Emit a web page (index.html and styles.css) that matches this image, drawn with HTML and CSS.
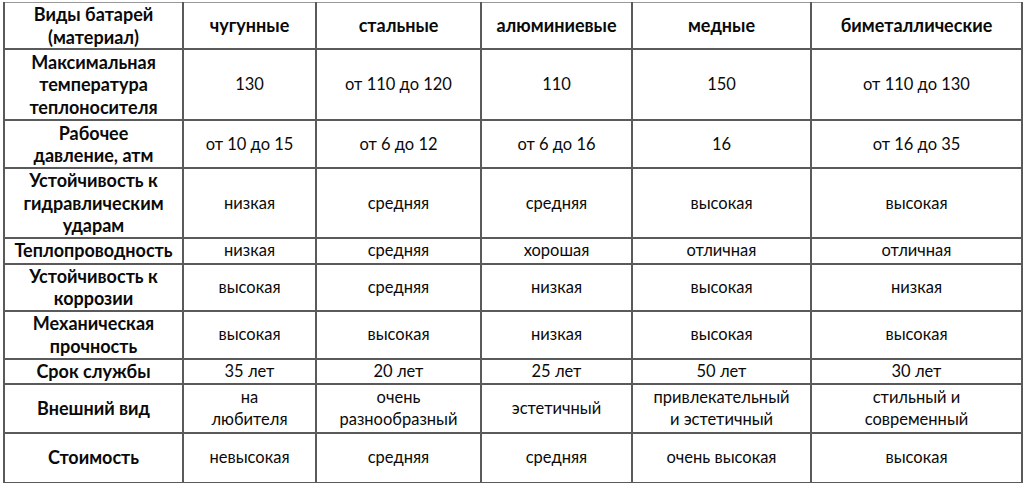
FILE: index.html
```html
<!DOCTYPE html>
<html lang="ru">
<head>
<meta charset="utf-8">
<link rel="stylesheet" href="styles.css">
</head>
<body>
<table class="grid">
  <colgroup>
    <col class="c1"><col class="c2"><col class="c3"><col class="c4"><col class="c5"><col class="c6">
  </colgroup>
  <tr class="r1">
    <th>Виды батарей<br>(материал)</th>
    <th>чугунные</th><th>стальные</th><th>алюминиевые</th><th>медные</th><th>биметаллические</th>
  </tr>
  <tr class="r2">
    <th>Максимальная<br>температура<br>теплоносителя</th>
    <td>130</td><td>от 110 до 120</td><td>110</td><td>150</td><td>от 110 до 130</td>
  </tr>
  <tr class="r3">
    <th>Рабочее<br>давление, атм</th>
    <td>от 10 до 15</td><td>от 6 до 12</td><td>от 6 до 16</td><td>16</td><td>от 16 до 35</td>
  </tr>
  <tr class="r4">
    <th>Устойчивость к<br>гидравлическим<br>ударам</th>
    <td>низкая</td><td>средняя</td><td>средняя</td><td>высокая</td><td>высокая</td>
  </tr>
  <tr class="r5">
    <th>Теплопроводность</th>
    <td>низкая</td><td>средняя</td><td>хорошая</td><td>отличная</td><td>отличная</td>
  </tr>
  <tr class="r6">
    <th>Устойчивость к<br>коррозии</th>
    <td>высокая</td><td>средняя</td><td>низкая</td><td>высокая</td><td>низкая</td>
  </tr>
  <tr class="r7">
    <th>Механическая<br>прочность</th>
    <td>высокая</td><td>высокая</td><td>низкая</td><td>высокая</td><td>высокая</td>
  </tr>
  <tr class="r8">
    <th>Срок службы</th>
    <td>35 лет</td><td>20 лет</td><td>25 лет</td><td>50 лет</td><td>30 лет</td>
  </tr>
  <tr class="r9">
    <th>Внешний вид</th>
    <td>на<br>любителя</td><td>очень<br>разнообразный</td><td>эстетичный</td><td>привлекательный<br>и эстетичный</td><td>стильный и<br>современный</td>
  </tr>
  <tr class="r10">
    <th>Стоимость</th>
    <td>невысокая</td><td>средняя</td><td>средняя</td><td>очень высокая</td><td>высокая</td>
  </tr>
</table>
</body>
</html>
```

FILE: styles.css
```css
html, body {
  margin: 0;
  padding: 0;
  background: #ffffff;
}
body {
  padding: 2px 3px 0 3px;
}
.grid {
  table-layout: fixed;
  width: 1019px;
  border-collapse: collapse;
  font-family: Lato, "Open Sans", "Liberation Sans", sans-serif;
  line-height: 22.5px;
  color: #0a0a0a;
}
.grid th, .grid td {
  border: 2px solid #5a5a5a;
  text-align: center;
  vertical-align: middle;
  padding: 0 1px;
  white-space: nowrap;
}
.grid th {
  font-weight: 700;
  font-size: 18px;
}
.grid td {
  font-weight: 400;
  font-size: 16.5px;
}
.c1 { width: 179px; }
.c2 { width: 133px; }
.c3 { width: 165px; }
.c4 { width: 151px; }
.c5 { width: 179px; }
.c6 { width: 211px; }
.r1 { height: 44px; }
.r2 { height: 71px; }
.r3 { height: 48px; }
.r4 { height: 69px; }
.r5 { height: 26px; }
.r6 { height: 47px; }
.r7 { height: 48px; }
.r8 { height: 25px; }
.r9 { height: 49px; }
.r10 { height: 50px; }
.r1 td, .r1 th { border-top-width: 1px; border-top-color: #999999; }
```
